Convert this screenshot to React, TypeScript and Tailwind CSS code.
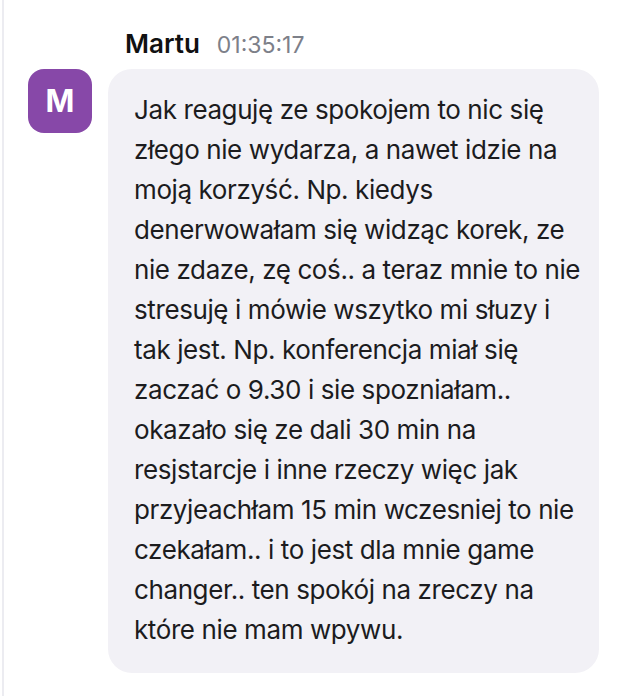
const lines = [
  "Jak reaguję ze spokojem to nic się",
  "złego nie wydarza, a nawet idzie na",
  "moją korzyść. Np. kiedys",
  "denerwowałam się widząc korek, ze",
  "nie zdaze, zę coś.. a teraz mnie to nie",
  "stresuję i mówie wszytko mi słuzy i",
  "tak jest. Np. konferencja miał się",
  "zaczać o 9.30 i sie spozniałam..",
  "okazało się ze dali 30 min na",
  "resjstarcje i inne rzeczy więc jak",
  "przyjeachłam 15 min wczesniej to nie",
  "czekałam.. i to jest dla mnie game",
  "changer.. ten spokój na zreczy na",
  "które nie mam wpywu.",
];

export default function App() {
  return (
    <div className="w-[628px] h-[696px] bg-white flex" style={{ fontFamily: "Inter, 'Noto Sans', sans-serif" }}>
      <div className="w-[2px] ml-[2px] bg-[#ececf1] shrink-0" />
      <div className="flex-1 pl-[24px] pt-[28px]">
        <div className="flex items-baseline gap-[17px] pl-[97px] mb-[8px] leading-[32px]">
          <span className="text-[26px] font-semibold text-[#111]">Martu</span>
          <span className="text-[23px] text-[#7d8089]">01:35:17</span>
        </div>
        <div className="flex gap-[16px] items-start">
          <div className="w-[64px] h-[64px] rounded-[16px] bg-[#8748a8] flex items-center justify-center shrink-0">
            <span className="text-white text-[31px] font-bold">M</span>
          </div>
          <div className="w-[491px] bg-[#f2f1f6] rounded-[24px] pl-[26px] pr-[16px] pt-[21px] pb-[23px]">
            <p className="text-[26px] tracking-[-0.4px] leading-[40px] text-[#1c1c1e] whitespace-nowrap">
              {lines.map((l, i) => (
                <span key={i} className="block">{l}</span>
              ))}
            </p>
          </div>
        </div>
      </div>
    </div>
  );
}
